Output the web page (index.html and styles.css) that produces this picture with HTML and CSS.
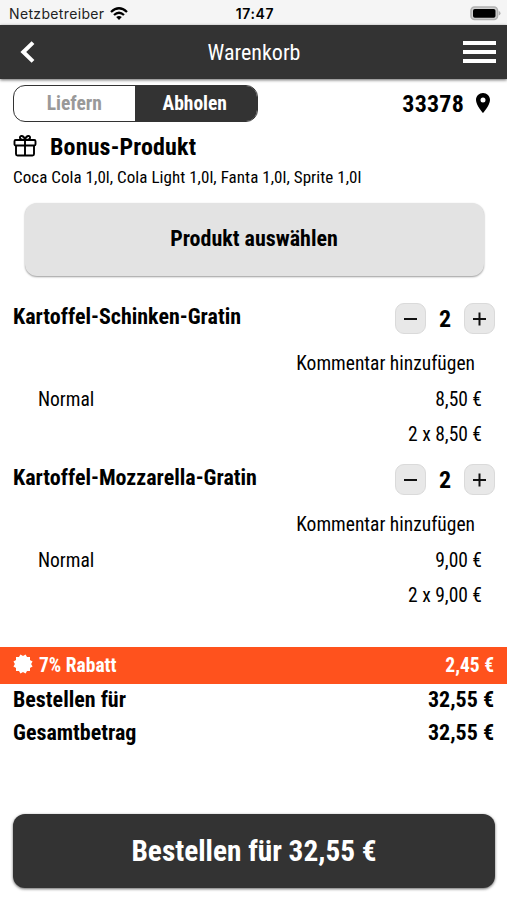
FILE: index.html
```html
<!DOCTYPE html>
<html lang="de">
<head>
  <meta charset="UTF-8">
  <meta name="viewport" content="width=device-width, initial-scale=1">
  <title>Warenkorb</title>
  <link rel="stylesheet" href="styles.css">
</head>
<body>
  <div class="statusbar">
    <div class="carrier">
      <span>Netzbetreiber</span>
      <svg class="wifi" viewBox="0 0 18 13">
        <path d="M1 5 Q9 -2.4 17 5 M4 8 Q9 3.6 14 8" fill="none" stroke="#000" stroke-width="2.3"/>
        <path d="M6.2 10.1 Q9 7.7 11.8 10.1 L9 13 Z"/>
      </svg>
    </div>
    <div class="clock">17:47</div>
    <div class="power">
      <svg class="battery" viewBox="0 0 31 15">
        <rect x="1" y="1" width="26.5" height="12.5" rx="3.5" fill="#d0d0d0" stroke="#b0b0b0" stroke-width="1.6"/>
        <rect x="3" y="3" width="22.5" height="8.7" rx="1.8"/>
        <path d="M28.7 5 Q30.5 5.6 30.5 7.3 Q30.5 9 28.7 9.6 Z" fill="#b0b0b0"/>
      </svg>
    </div>
  </div>

  <header class="header">
    <svg class="back" viewBox="0 0 16 22">
      <path d="M13 1.6 L3.3 11 L13 20.4" fill="none" stroke="#fff" stroke-width="4"/>
    </svg>
    <h1>Warenkorb</h1>
    <div class="menu"><i></i><i></i><i></i></div>
  </header>

  <main>
    <div class="delivery">
      <div class="switch">
        <div class="option">Liefern</div>
        <div class="option active">Abholen</div>
      </div>
      <div class="zip">
        <span>33378</span>
        <svg class="pin" viewBox="0 0 14 20">
          <path fill-rule="evenodd" d="M7 0 C3.1 0 0 3.1 0 7 C0 12.2 7 20 7 20 S14 12.2 14 7 C14 3.1 10.9 0 7 0 Z M7 4.5 A2.5 2.5 0 1 1 7 9.5 A2.5 2.5 0 1 1 7 4.5 Z"/>
        </svg>
      </div>
    </div>

    <div class="bonus">
      <svg class="gift" viewBox="0 0 24 22">
        <g fill="none" stroke="#000" stroke-width="1.9">
          <rect x="1.5" y="5" width="21" height="5.5" rx="1.2"/>
          <path d="M3 10.5 V19 Q3 20.5 4.5 20.5 H19.5 Q21 20.5 21 19 V10.5 M12 5 V20.5"/>
          <path d="M12 5 C11 0 6.5 0 7 3 Q7.3 5 12 5 C13 0 17.5 0 17 3 Q16.7 5 12 5"/>
        </g>
      </svg>
      <h2>Bonus-Produkt</h2>
    </div>
    <p class="bonus-text">Coca Cola 1,0l, Cola Light 1,0l, Fanta 1,0l, Sprite 1,0l</p>
    <button class="select">Produkt auswählen</button>

    <div class="item">
      <div class="item-head">
        <h3>Kartoffel-Schinken-Gratin</h3>
        <div class="counter">
          <button class="minus"></button>
          <span>2</span>
          <button class="plus"></button>
        </div>
      </div>
      <div class="comment">Kommentar hinzufügen</div>
      <div class="line"><span>Normal</span><span>8,50 €</span></div>
      <div class="line sum"><span>2 x 8,50 €</span></div>
    </div>

    <div class="item">
      <div class="item-head">
        <h3>Kartoffel-Mozzarella-Gratin</h3>
        <div class="counter">
          <button class="minus"></button>
          <span>2</span>
          <button class="plus"></button>
        </div>
      </div>
      <div class="comment">Kommentar hinzufügen</div>
      <div class="line"><span>Normal</span><span>9,00 €</span></div>
      <div class="line sum"><span>2 x 9,00 €</span></div>
    </div>

    <div class="discount">
      <svg class="badge" viewBox="-10 -10 20 20">
        <g fill="#fff">
          <rect x="-7" y="-7" width="14" height="14"/>
          <rect x="-7" y="-7" width="14" height="14" transform="rotate(30)"/>
          <rect x="-7" y="-7" width="14" height="14" transform="rotate(60)"/>
        </g>
      </svg>
      <span>7% Rabatt</span>
      <span class="amount">2,45 €</span>
    </div>
    <div class="total"><span>Bestellen für</span><span>32,55 €</span></div>
    <div class="total"><span>Gesamtbetrag</span><span>32,55 €</span></div>
  </main>

  <button class="order">Bestellen für 32,55 €</button>
</body>
</html>
```
FILE: styles.css
```css
* {
  box-sizing: border-box;
}

body {
  margin: 0;
  height: 900px;
  display: flex;
  flex-direction: column;
  background: #fff;
  color: #000;
  font-family: 'Roboto Condensed', Roboto, sans-serif;
  font-stretch: 75%;
  font-size: 19.5px;
  overflow: hidden;
}

h1, h2, h3, p {
  margin: 0;
}

button {
  border: none;
  padding: 0;
  color: #000;
  font-family: inherit;
  font-stretch: inherit;
  font-weight: bold;
}

.statusbar {
  height: 25px;
  display: grid;
  grid-template-columns: 1fr auto 1fr;
  align-items: center;
  padding: 2px 6px 0 9px;
  background: #f5f5f5;
  font-family: Inter, sans-serif;
  font-stretch: normal;
  font-size: 14px;
}

.carrier {
  display: flex;
  align-items: center;
  gap: 6px;
  color: #222;
  letter-spacing: 0.35px;
}

.wifi {
  width: 18px;
  height: 13px;
}

.clock {
  font-weight: 600;
  letter-spacing: 0.6px;
}

.power {
  display: flex;
  justify-content: flex-end;
}

.battery {
  width: 31px;
  height: 15px;
}

.header {
  height: 54px;
  display: grid;
  grid-template-columns: 1fr auto 1fr;
  align-items: center;
  padding: 0 11px 0 20px;
  background: #333;
  color: #fff;
  box-shadow: 0 1px 3px rgba(0,0,0,0.6);
}

.header h1 {
  margin-right: 8px;
  font-size: 22px;
  font-weight: normal;
}

.back {
  width: 16px;
  height: 22px;
}

.menu {
  justify-self: end;
  width: 33px;
  display: flex;
  flex-direction: column;
  gap: 5px;
}

.menu i {
  height: 4px;
  background: #fff;
}

.delivery {
  display: flex;
  justify-content: space-between;
  align-items: center;
  padding: 6px 17px 0 13px;
}

.switch {
  width: 245px;
  height: 37px;
  display: flex;
  border: 1px solid #333;
  border-radius: 12px;
  overflow: hidden;
  font-size: 19.5px;
  line-height: 35px;
  font-weight: bold;
  text-align: center;
}

.option {
  flex: 1;
  color: #999;
}

.option.active {
  background: #333;
  color: #fff;
  padding-right: 2px;
}

.zip {
  display: flex;
  align-items: center;
  gap: 12px;
  font-size: 24px;
  font-weight: bold;
}

.zip span {
  letter-spacing: 0.2px;
}

.pin {
  width: 14px;
  height: 20px;
  margin-bottom: 2px;
}

.bonus {
  height: 48px;
  display: flex;
  align-items: center;
  gap: 13px;
  padding-left: 13px;
}

.bonus h2 {
  padding-top: 1px;
  font-size: 24px;
  letter-spacing: 0.15px;
}

.gift {
  width: 24px;
  height: 22px;
}

.bonus-text {
  padding-left: 13px;
  font-size: 17px;
  line-height: 14px;
  letter-spacing: 0.04px;
}

.select {
  display: block;
  width: 459px;
  height: 73px;
  margin: 19px 0 0 25px;
  padding: 0 1px 2px 0;
  border-radius: 12px;
  background: #e3e3e3;
  box-shadow: 0 1px 2px rgba(0,0,0,0.4);
  font-size: 22px;
}

.item {
  height: 161px;
}

.select + .item {
  margin-top: 23px;
}

.item-head {
  height: 44px;
  display: flex;
  justify-content: space-between;
  padding: 0 12px 0 13px;
}

.item-head h3 {
  font-size: 22px;
  line-height: 35px;
}

.counter {
  display: flex;
  align-items: center;
  margin-top: -5px;
  font-size: 24px;
  font-weight: bold;
}

.counter span {
  width: 38px;
  text-align: center;
}

.counter button {
  width: 31px;
  height: 31px;
  display: grid;
  place-content: center;
  place-items: center;
  border: 1px solid #dadada;
  border-radius: 9px;
  background: #e8e8e8;
}

.counter button::before,
.counter button::after {
  content: '';
  grid-area: 1 / 1;
  width: 13px;
  height: 2px;
  background: #111;
}

.counter .minus::after {
  display: none;
}

.counter .plus::after {
  transform: rotate(90deg);
}

.comment {
  height: 35px;
  line-height: 41px;
  padding-right: 32px;
  text-align: right;
}

.line {
  height: 36px;
  display: flex;
  justify-content: space-between;
  padding: 0 25px 0 38px;
  line-height: 43px;
}

.line.sum {
  justify-content: flex-end;
  line-height: 41px;
}

.discount {
  height: 37px;
  display: flex;
  align-items: center;
  gap: 6px;
  margin-top: 26px;
  padding: 0 13px 1px;
  background: #ff521d;
  color: #fff;
  font-size: 19.5px;
  font-weight: bold;
}

.badge {
  width: 20px;
  height: 20px;
  margin-bottom: 2px;
}

.amount {
  margin-left: auto;
}

.total {
  height: 33px;
  display: flex;
  justify-content: space-between;
  padding: 0 13px;
  font-size: 22px;
  line-height: 32px;
  font-weight: bold;
}

.order {
  height: 74px;
  margin: auto 12px 12px 13px;
  border-radius: 12px;
  background: #333;
  box-shadow: 0 1px 3px rgba(0,0,0,0.6);
  color: #fff;
  font-size: 29.3px;
}
```
